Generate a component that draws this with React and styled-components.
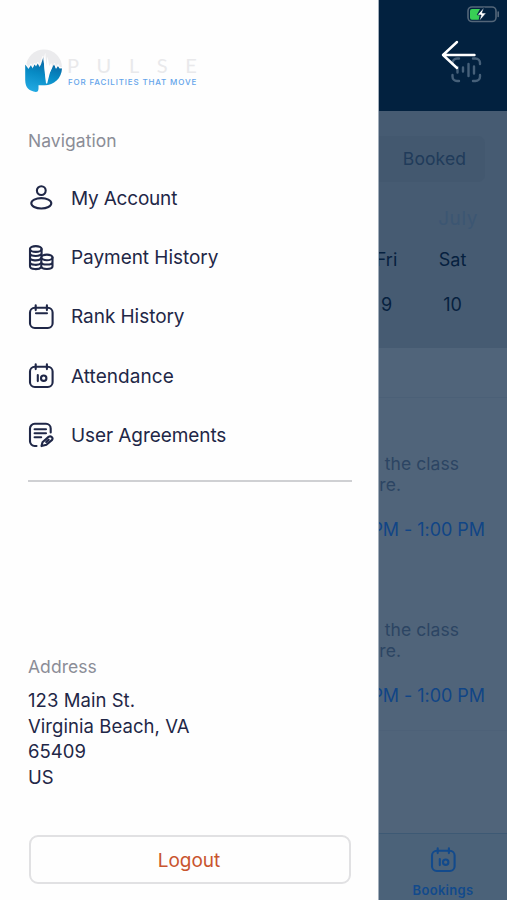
import React from "react";
import styled, { createGlobalStyle } from "styled-components";

const GlobalStyle = createGlobalStyle`
  * { box-sizing: border-box; }
  body { margin: 0; background: #50647a; font-family: Inter, "Liberation Sans", sans-serif; }
  svg { display: block; overflow: visible; flex: none; }
`;

const Screen = styled.div`
  display: flex;
  width: 507px;
  height: 900px;
  overflow: hidden;
`;

const Drawer = styled.aside`
  display: flex;
  flex-direction: column;
  flex: none;
  width: 379px;
  height: 900px;
  padding: 49px 26px 0 28px;
  background: #fefefe;
  border-right: 1px solid #a3afbc;
  color: #1f2747;
`;

const Brand = styled.div`
  display: flex;
  gap: 4px;
  height: 44px;
  margin-left: -3px;
`;

const BrandText = styled.div`
  padding-top: 6px;
  white-space: nowrap;
`;

const BrandName = styled.div`
  font: 400 20px/20px Lato, sans-serif;
  letter-spacing: 17.6px;
  color: #e9e9eb;
`;

const Tagline = styled.div`
  margin-top: 3px;
  padding-left: 1px;
  font: 500 8px/9px Inter, sans-serif;
  letter-spacing: 0.84px;
  color: #63a4ea;
`;

const Label = styled.div`
  margin-top: ${(p) => p.$top}px;
  font-size: 17.5px;
  line-height: 24px;
  letter-spacing: 0.05px;
  color: #8b8d97;
`;

const Nav = styled.nav`
  margin-top: 15.6px;
  height: 313.4px;
  border-bottom: 2px solid #cfd0d3;
`;

const NavItem = styled.a`
  display: flex;
  align-items: center;
  gap: 17px;
  height: 59.3px;
  font-size: 19px;
  letter-spacing: ${(p) => p.$spacing}px;
`;

const Address = styled.address`
  margin-top: 9px;
  height: 102.4px;
  font-style: normal;
  font-size: 18.5px;
  line-height: 25.6px;
  letter-spacing: 0.06px;
`;

const Logout = styled.button`
  height: 49px;
  width: 322px;
  margin: 44.6px 0 0 1px;
  padding: 2px 2px 0 0;
  border: 2px solid #e1e1e3;
  border-radius: 9px;
  background: #fefefe;
  font: 400 19px Inter, sans-serif;
  letter-spacing: -0.05px;
  color: #c9552f;
`;

const Backdrop = styled.main`
  position: relative;
  display: flex;
  flex-direction: column;
  width: 128px;
  height: 900px;
  overflow: hidden;
  background: #50647a;
  white-space: nowrap;
`;

const Header = styled.header`
  display: flex;
  flex-direction: column;
  align-items: flex-end;
  gap: 34px;
  height: 111px;
  padding: 6px 8px 0 0;
  background: #02213f;
`;

const ScanIcon = styled.svg`
  margin-right: 17px;
`;

const CloseArrow = styled.svg`
  position: absolute;
  left: 62px;
  top: 40px;
`;

const Calendar = styled.section`
  height: 237px;
  padding-top: 25px;
  background: #465b72;
  color: #06213f;
`;

const Segment = styled.div`
  width: 106px;
  height: 46px;
  padding-right: 19px;
  border-radius: 0 7px 7px 0;
  background: #43586f;
  text-align: right;
  font-size: 17.5px;
  line-height: 46px;
  letter-spacing: 0.1px;
  color: #203b5a;
`;

const Month = styled.div`
  margin-top: 24px;
  padding-right: 29px;
  text-align: right;
  font-size: 19px;
  line-height: 26px;
  letter-spacing: 0.6px;
  color: #3c5672;
`;

const DayRow = styled.div`
  display: grid;
  grid-template-columns: 37px 71px;
  justify-items: center;
  margin-top: ${(p) => p.$top}px;
  margin-left: -11px;
  column-gap: 12px;
  font-size: 18px;
  line-height: 26px;
`;

const ClassCard = styled.article`
  height: ${(p) => p.$height}px;
  padding-top: ${(p) => p.$pad}px;
  border-bottom: ${(p) => (p.$rule ? "1px solid #4d6178" : "0")};
`;

const Description = styled.p`
  margin: 0 48px 0 -40px;
  display: flex;
  flex-direction: column;
  font-size: 17.5px;
  line-height: 21px;
  letter-spacing: 0.05px;
  color: #2c4563;
`;

const DescriptionEnd = styled.span`
  align-self: flex-end;
  margin-right: ${(p) => p.$right}px;
`;

const Time = styled.div`
  display: flex;
  justify-content: flex-end;
  margin-top: 22px;
  padding-right: 22px;
  font-size: 18px;
  line-height: 26px;
  letter-spacing: -0.05px;
  color: #114586;
`;

const Divider = styled.div`
  height: 50px;
  border-bottom: 1px solid #4b6077;
`;

const TabBar = styled.footer`
  display: flex;
  flex-direction: column;
  align-items: center;
  gap: 9px;
  height: 67px;
  margin-top: auto;
  padding-top: 13px;
  border-top: 1px solid #3d5974;
  background: #4b6279;
  font-size: 13px;
  font-weight: 600;
  line-height: 16px;
  letter-spacing: 0.3px;
  color: #124a8c;
`;

function LineIcon({ children }) {
  return (
    <svg width="26" height="26" viewBox="0 0 26 26" fill="none" stroke="currentColor" strokeWidth="2.1" strokeLinecap="round" strokeLinejoin="round">
      {children}
    </svg>
  );
}

function AccountIcon() {
  return (
    <LineIcon>
      <circle cx="13.3" cy="5.6" r="4.4" />
      <ellipse cx="13.3" cy="18.3" rx="10" ry="5.2" />
    </LineIcon>
  );
}

function CoinsIcon() {
  return (
    <LineIcon>
      <ellipse cx="7.8" cy="4" rx="5.8" ry="2.9" />
      <path d="M2 4v17.2c0 3.600 9 3.700 11.300 1M13.600 4v6.400M2 8.200c0 3.700 11.600 3.700 11.600 0M2 12.500c0 3.500 8.500 3.700 11 1.200M2 16.900c0 3.500 8.800 3.800 11.200 1.200" />
      <ellipse cx="18.900" cy="12.400" rx="5.600" ry="2.800" />
      <path d="M13.300 12.400v8.900c0 3.600 11.200 3.600 11.200 0v-8.900M13.300 16.900c0 3.500 11.200 3.500 11.200 0" />
    </LineIcon>
  );
}

function CalendarIcon({ ten }) {
  return (
    <LineIcon>
      <rect x="2" y="3.8" width="22.6" height="20.2" rx="4.8" />
      <path d="M7.7 1.2v4.9M18.9 1.2v4.9" />
      {ten ? (
        <>
          <path d="M9.8 12.100v6" />
          <circle cx="15.700" cy="15.200" r="2.700" />
        </>
      ) : (
        <path d="M8 9.300h11" />
      )}
    </LineIcon>
  );
}

function AgreementIcon() {
  return (
    <LineIcon>
      <path d="M8.500 24H6.700a4.700 4.700 0 0 1-4.700-4.700V6.500a4.700 4.700 0 0 1 4.700-4.700h11.300a4.700 4.700 0 0 1 4.700 4.700v4M6.600 7.200h11.400M6.600 11.200h11.400M6.600 15.200h6.600" />
      <path d="m14.500 20.200 6-5.300c2.400-1.500 5 .9 3.600 3l-5.700 4.900-4.900 1.300zM18.200 20l2.500-2.200" />
    </LineIcon>
  );
}

function PulseMark() {
  return (
    <svg width="38" height="44" viewBox="0 0 38 44">
      <defs>
        <linearGradient id="pulse" x1="0.6" y1="0" x2="0.3" y2="1">
          <stop offset="0" stopColor="#0a5f9c" />
          <stop offset="0.5" stopColor="#078bc5" />
          <stop offset="1" stopColor="#22a9e2" />
        </linearGradient>
      </defs>
      <circle cx="19" cy="18.5" r="18" fill="#ebebed" />
      <path d="M0.2 15.500 3.500 20 6 16 7.500 19.500 9.500 15.500 11 17.500 12.800 14.500 14.500 18 16 15.500 18.200 8.500 20 23 21.300 34 24.500 24 27.300 18 29.200 15.500 31 20 33 17 34.500 19.500H37C36.500 29.500 29 36.200 19.500 36.200H13.500V39.500C13.500 42 12.500 43 10.800 43 4.700 42 0.200 39.300 0.200 31Z" fill="url(#pulse)" />
      <path d="M18.600 10 20.300 3.500 21.300 17 22.600 7.500 24.300 17 26.200 14 27.500 18 24.800 24 22.200 34.500H21L19.800 24Z" fill="#fefefe" />
      <path d="M0.500 14.500 3.500 18.500 6 14.800 7.500 18 9.500 14 11 16 12.800 13 14.500 16 18 7M29.200 14 31 18.500 33 15.500 34.500 18.500H37" fill="none" stroke="#fefefe" strokeWidth="0.9" />
    </svg>
  );
}

function Battery() {
  return (
    <svg width="32" height="17" viewBox="0 0 32 17" fill="none">
      <rect x="1" y="1" width="28" height="14.5" rx="4" stroke="#546679" strokeWidth="1.6" />
      <path d="M31.2 6v4.5" stroke="#546679" strokeWidth="1.6" strokeLinecap="round" />
      <path d="M5 3h8L9.700 9h3l-1 4.800H5a2 2 0 0 1-2-2V5a2 2 0 0 1 2-2z" fill="#38cf55" />
      <path d="M17 1.400 10.400 9h3.700l-1.700 6 6.800-8h-4z" fill="#fff" stroke="#02213f" strokeWidth="0.6" />
    </svg>
  );
}

function ClassEntry({ height, pad, rule }) {
  return (
    <ClassCard $height={height} $pad={pad} $rule={rule}>
      <Description>
        <DescriptionEnd $right={0}>the class</DescriptionEnd>
        <DescriptionEnd $right={58}>re.</DescriptionEnd>
      </Description>
      <Time>PM - 1:00 PM</Time>
    </ClassCard>
  );
}

const NAV = [
  ["My Account", <AccountIcon key="i" />, -0.2],
  ["Payment History", <CoinsIcon key="i" />, -0.05],
  ["Rank History", <CalendarIcon key="i" />, -0.05],
  ["Attendance", <CalendarIcon key="i" ten />, 0.05],
  ["User Agreements", <AgreementIcon key="i" />, -0.08],
];

export default function App() {
  return (
    <>
      <GlobalStyle />
      <Screen>
        <Drawer>
          <Brand>
            <PulseMark />
            <BrandText>
              <BrandName>PULSE</BrandName>
              <Tagline>FOR FACILITIES THAT MOVE</Tagline>
            </BrandText>
          </Brand>
          <Label $top={36}>Navigation</Label>
          <Nav>
            {NAV.map(([label, icon, spacing]) => (
              <NavItem key={label} $spacing={spacing}>
                {icon}
                {label}
              </NavItem>
            ))}
          </Nav>
          <Label $top={173}>Address</Label>
          <Address>
            123 Main St.
            <br />
            Virginia Beach, VA
            <br />
            65409
            <br />
            US
          </Address>
          <Logout>Logout</Logout>
        </Drawer>
        <Backdrop>
          <Header>
            <Battery />
            <ScanIcon width="31" height="26" viewBox="0 0 31 26" fill="none" stroke="#466079" strokeWidth="2.4" strokeLinecap="round">
              <path d="M1.500 7V6a4.500 4.500 0 0 1 4.500-4.500h2M22 1.500h2.500A4.500 4.500 0 0 1 29 6v1M1.500 18v1.500A4.500 4.500 0 0 0 6 24h2M22 24h2.500a4.500 4.500 0 0 0 4.500-4.500V18M6.500 10v5.500M12 10.500v4M17.500 7v12M23 9.500v7" />
            </ScanIcon>
          </Header>
          <CloseArrow width="36" height="30" viewBox="0 0 36 30" fill="none" stroke="#fff" strokeWidth="2.4" strokeLinecap="round" strokeLinejoin="round">
            <path d="M33.500 15H2M16 2 2 15l14 13" />
          </CloseArrow>
          <Calendar>
            <Segment>Booked</Segment>
            <Month>July</Month>
            <DayRow $top={15}>
              <span>Fri</span>
              <span>Sat</span>
            </DayRow>
            <DayRow $top={19}>
              <span>9</span>
              <span>10</span>
            </DayRow>
          </Calendar>
          <Divider />
          <ClassEntry height={166} pad={55} />
          <ClassEntry height={167} pad={55} rule />
          <TabBar>
            <CalendarIcon ten />
            Bookings
          </TabBar>
        </Backdrop>
      </Screen>
    </>
  );
}
